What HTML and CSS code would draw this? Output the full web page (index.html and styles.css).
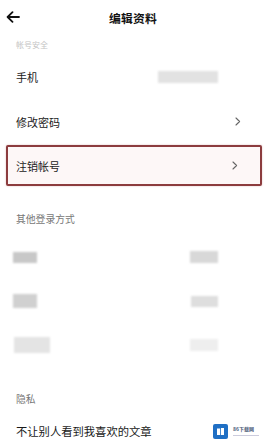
FILE: index.html
```html
<!DOCTYPE html>
<html lang="zh">
<head>
<meta charset="utf-8">
<link rel="stylesheet" href="styles.css">
</head>
<body>
<div class="page">
  <header class="topbar">
    <svg class="back" width="14" height="12" viewBox="0 0 14 12"><path d="M13 6H2M6.5 1.2L1.6 6l4.9 4.8" fill="none" stroke="#111" stroke-width="1.8" stroke-linecap="round" stroke-linejoin="round"/></svg>
    <div class="title">编辑资料</div>
  </header>
  <div class="section-cut"><span>帐号安全</span></div>
  <div class="row">
    <span class="label">手机</span>
    <span class="blur blur-phone"></span>
  </div>
  <div class="row">
    <span class="label">修改密码</span>
    <svg class="chev" width="6" height="9" viewBox="0 0 6 9"><path d="M1 1l3.6 3.5L1 8" fill="none" stroke="#666" stroke-width="1.1" stroke-linecap="round" stroke-linejoin="round"/></svg>
  </div>
  <div class="row row-hl">
    <span class="label">注销帐号</span>
    <svg class="chev" width="6" height="9" viewBox="0 0 6 9"><path d="M1 1l3.6 3.5L1 8" fill="none" stroke="#666" stroke-width="1.1" stroke-linecap="round" stroke-linejoin="round"/></svg>
  </div>
  <div class="section">其他登录方式</div>
  <div class="brow"><span class="blur bl1"></span><span class="blur br1"></span></div>
  <div class="brow"><span class="blur bl2"></span><span class="blur br2"></span></div>
  <div class="brow"><span class="blur bl3"></span><span class="blur br3"></span></div>
  <div class="section sec-priv">隐私</div>
  <div class="row row-last">
    <span class="label big">不让别人看到我喜欢的文章</span>
  </div>
  <div class="logo">
    <span class="logo-box"><svg width="9" height="9" viewBox="0 0 9 9"><path d="M1 1.5h3.2v6.5H1zM5 1h3v7H5z" fill="#fff"/></svg></span>
    <span class="logo-text"><b>86下载网</b><i></i></span>
  </div>
</div>
</body>
</html>
```
FILE: styles.css
```css
* { box-sizing: border-box; }
html, body { margin: 0; padding: 0; background: #fff; }
body {
  font-family: "Noto Sans CJK SC", "Noto Sans", sans-serif;
  color: #222;
  width: 266px;
  height: 442px;
  overflow: hidden;
}
.page { position: relative; height: 442px; overflow: hidden; }
.topbar {
  height: 35px;
  display: flex;
  align-items: center;
  justify-content: center;
  position: relative;
}
.back { position: absolute; left: 6px; top: 11px; }
.title { font-size: 11.8px; font-weight: 700; color: #111; letter-spacing: 0.2px; }
.section-cut {
  height: 19px;
  padding-left: 16px;
  display: flex;
  align-items: center;
}
.section-cut span {
  font-size: 8px;
  color: #c4c4c4;
  line-height: 10px;
}
.row {
  height: 45px;
  display: flex;
  align-items: center;
  justify-content: space-between;
  padding: 0 25px 0 16px;
}
.label { font-size: 11px; color: #222; }
.label.big { font-size: 11.3px; color: #1a1a1a; }
.chev { display: block; }
.blur { display: block; background: #dcdcdc; filter: blur(1px); }
.blur-phone { width: 60px; height: 12px; margin-right: 23px; background: #e2e2e2; }
.row-hl {
  margin: 1px 4px 0 6px;
  height: 41px;
  border: 2px solid #8c3c3e;
  border-radius: 2px;
  background: #fdf7f7;
  box-shadow: 0 0 2px rgba(160, 60, 60, 0.35);
  padding: 0 22px 0 8px;
}
.section {
  height: 49px;
  padding: 26px 0 0 16px;
  font-size: 9.8px;
  line-height: 14px;
  color: #777;
}
.brow {
  height: 44px;
  display: flex;
  align-items: center;
  justify-content: space-between;
  padding: 0 48px 0 13px;
}
.bl1 { width: 24px; height: 11px; background: #c8c8c8; }
.br1 { width: 28px; height: 12px; background: #d8d8d8; }
.bl2 { width: 24px; height: 14px; background: #d0d0d0; }
.br2 { width: 27px; height: 11px; background: #dedede; }
.bl3 { width: 36px; height: 16px; background: #e4e4e4; margin-left: 1px; }
.br3 { width: 28px; height: 12px; background: #eeeeee; }
.sec-priv { height: 40px; padding-top: 25px; }
.row-last { height: 48px; padding-top: 0; }
.logo {
  position: absolute;
  left: 213px;
  top: 424px;
  display: flex;
  gap: 5px;
  align-items: flex-start;
}
.logo-box {
  width: 15px;
  height: 15px;
  background: #1f6fc4;
  border-radius: 2px;
  display: flex;
  align-items: center;
  justify-content: center;
}
.logo-text { display: flex; flex-direction: column; gap: 3px; padding-top: 2px; }
.logo-text b { font-size: 5px; color: #4a5b78; font-weight: 700; line-height: 6px; }
.logo-text i { display: block; width: 26px; height: 1px; background: #ccd; }
```
